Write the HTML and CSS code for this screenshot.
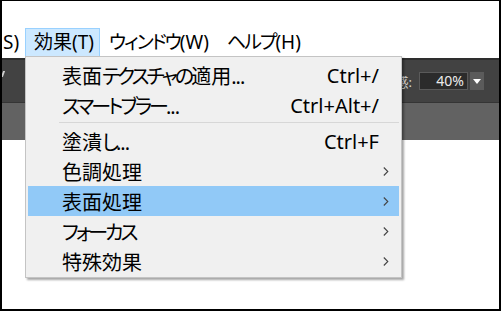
FILE: index.html
```html
<html>
    <head>
        <title>効果メニュー</title>
        <link rel="stylesheet" href="styles.css">
    </head>
    <body>
        <div class="frame">
            <div class="menubar">
                <span class="mb-item cut">S)</span>
                <span class="mb-item active">効果(T)</span>
                <span class="mb-item"><span class="k">ウィンドウ</span>(W)</span>
                <span class="mb-item"><span class="k">ヘルプ</span>(H)</span>
            </div>
            <div class="toolbar">
                <div class="band top">
                    <span class="tick"></span>
                    <div class="opt">
                        <span class="opt-label">感:</span>
                        <span class="opt-box">40%</span>
                        <span class="opt-drop"><svg width="8" height="5" viewBox="0 0 8 5"><polygon points="0,0 8,0 4,5" fill="#fff"/></svg></span>
                    </div>
                </div>
                <div class="band low"></div>
            </div>

            <!-- dropdown of 効果(T) -->
            <div class="menu">
                <div class="row"><span class="label">表面<span class="k">テクスチャの</span>適用<span class="dots">...</span></span><span class="key">Ctrl+/</span><span class="sub"></span></div>
                <div class="row"><span class="label"><span class="k">スマートブラー</span><span class="dots">...</span></span><span class="key">Ctrl+Alt+/</span><span class="sub"></span></div>
                <div class="sep"></div>
                <div class="row"><span class="label">塗潰<span class="k">し</span><span class="dots">...</span></span><span class="key">Ctrl+F</span><span class="sub"></span></div>
                <div class="row"><span class="label">色調処理</span><span class="key"></span><span class="sub"><svg width="6" height="9" viewBox="0 0 6 9"><polyline points="0.8,0.5 4.8,4.5 0.8,8.5" fill="none" stroke="#444" stroke-width="1.1"/></svg></span></div>
                <div class="row hover"><span class="label">表面処理</span><span class="key"></span><span class="sub"><svg width="6" height="9" viewBox="0 0 6 9"><polyline points="0.8,0.5 4.8,4.5 0.8,8.5" fill="none" stroke="#444" stroke-width="1.1"/></svg></span></div>
                <div class="row"><span class="label"><span class="k">フォーカス</span></span><span class="key"></span><span class="sub"><svg width="6" height="9" viewBox="0 0 6 9"><polyline points="0.8,0.5 4.8,4.5 0.8,8.5" fill="none" stroke="#444" stroke-width="1.1"/></svg></span></div>
                <div class="row"><span class="label">特殊効果</span><span class="key"></span><span class="sub"><svg width="6" height="9" viewBox="0 0 6 9"><polyline points="0.8,0.5 4.8,4.5 0.8,8.5" fill="none" stroke="#444" stroke-width="1.1"/></svg></span></div>
            </div>
        </div>
    </body>
</html>
```

FILE: styles.css
```css
body{
    margin: 0;
}
.frame{
    position: relative;
    width: 501px;
    height: 311px;
    box-sizing: border-box;
    border-top: 1px solid #000;
    border-left: 2px solid #000;
    border-right: 2px solid #000;
    border-bottom: 2px solid #000;
    background: #fff;
    overflow: hidden;
    font-family: "Noto Sans", "Noto Sans CJK JP", sans-serif;
    font-feature-settings: "palt";
    color: #000;
}
.menubar{
    display: flex;
    margin-top: 27px;
    height: 29px;
    font-size: 19px;
}
.menubar .k{
    letter-spacing: -2px;
}
.mb-item{
    box-sizing: border-box;
    height: 29px;
    line-height: 27px;
    padding: 0 8px;
    border: 1px solid transparent;
    white-space: nowrap;
}
.mb-item.cut{
    padding: 0 8px 0 0;
    width: 23px;
}
.mb-item.active{
    background: #cce8ff;
    border-color: #99d1ff;
    width: 75px;
}
.toolbar{
    margin-top: 1px;
}
.band.top{
    height: 45px;
    box-sizing: border-box;
    background: #424242;
    border-top: 2px solid #2e2e2e;
    border-bottom: 1px solid #353535;
    display: flex;
    align-items: center;
    justify-content: space-between;
    padding-right: 15px;
}
.tick{
    width: 2px;
    height: 6px;
    margin-bottom: 14px;
    background: #cfcfcf;
    transform: skewX(-20deg);
}
.band.low{
    height: 37px;
    background: #626262;
}
.opt{
    display: flex;
    align-items: center;
    gap: 2px;
    font-size: 13px;
    color: #d4d4d4;
}
.opt-label{
    margin-right: 5px;
}
.opt-box{
    box-sizing: border-box;
    width: 49px;
    height: 18px;
    line-height: 16px;
    background: #2b2b2b;
    border: 1px solid #5a5a5a;
    color: #ececec;
    text-align: right;
    padding-right: 3px;
    font-size: 14px;
}
.opt-drop{
    width: 14px;
    height: 18px;
    background: #5b5b5b;
    display: flex;
    align-items: center;
    justify-content: center;
}
.menu{
    position: absolute;
    left: 23px;
    top: 55px;
    width: 377px;
    box-sizing: border-box;
    background: #f0f0f0;
    border: 1px solid #c4c4c4;
    padding: 3px 0 1px;
    box-shadow: 2px 2px 2px rgba(0,0,0,0.35);
    font-size: 20px;
}
.menu .k{
    letter-spacing: -3px;
}
.menu .dots{
    letter-spacing: -1px;
}
.row{
    display: grid;
    grid-template-columns: 1fr auto 20px;
    align-items: center;
    height: 30px;
    margin: 0 2px;
    padding-left: 34px;
    white-space: nowrap;
}
.row.hover{
    background: #91c9f7;
}
.key{
    text-align: right;
}
.sub{
    display: flex;
    align-items: center;
    padding-left: 4px;
}
.sep{
    height: 1px;
    margin: 2px 2px 3px 33px;
    background: #d7d7d7;
}
```
